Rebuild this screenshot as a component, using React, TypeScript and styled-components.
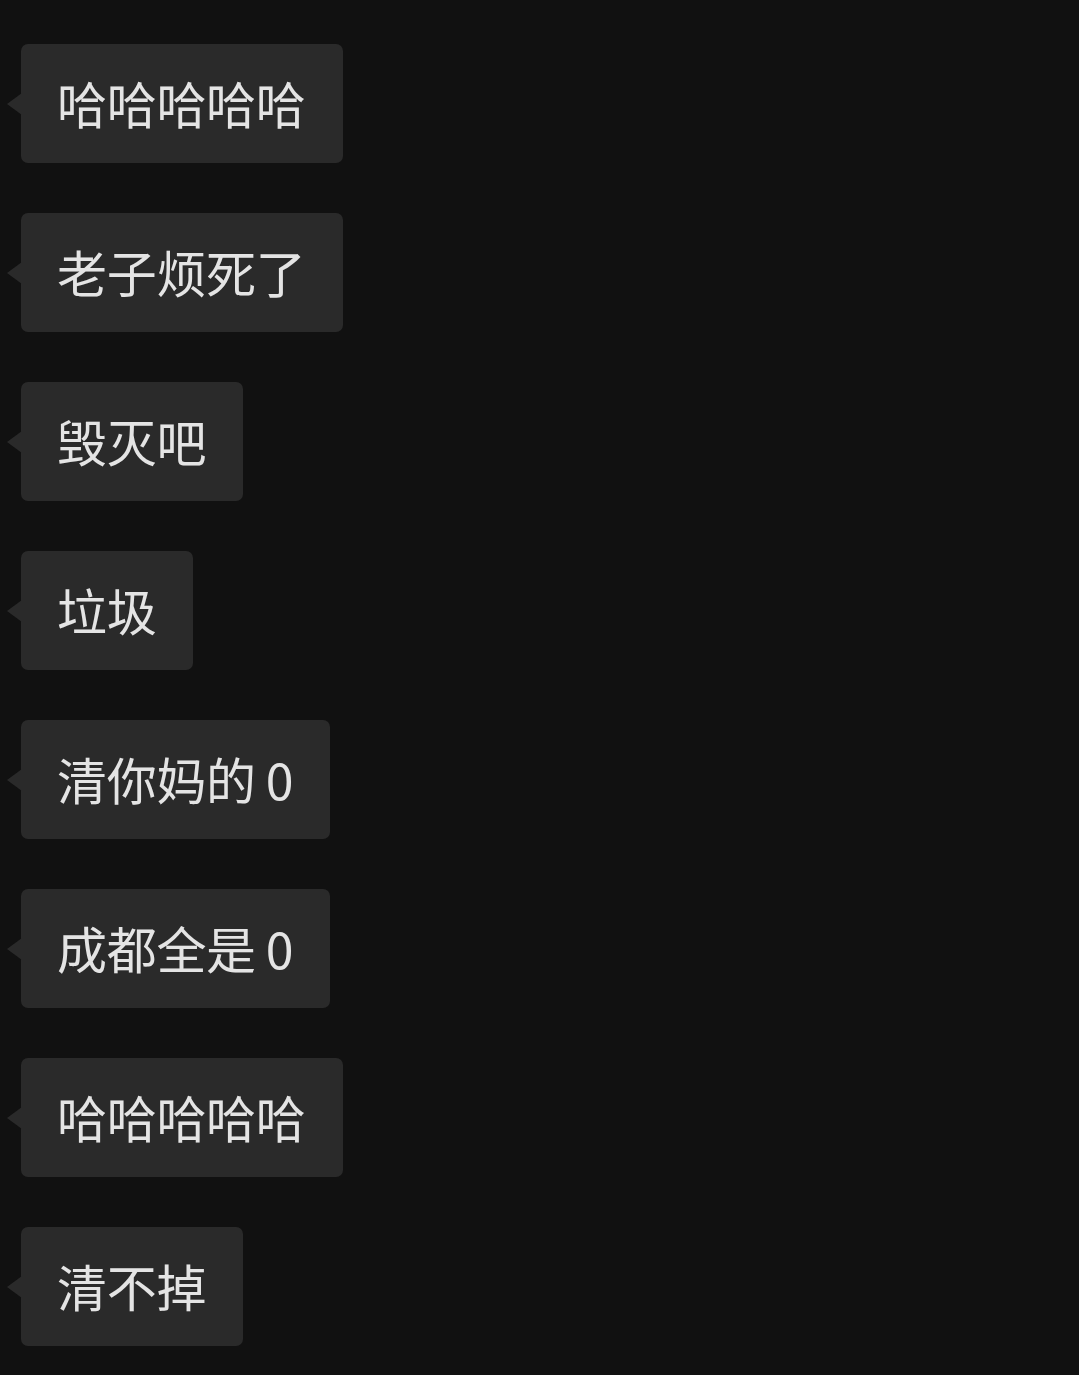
import React from 'react'
import styled, { createGlobalStyle } from 'styled-components'

const GlobalStyle = createGlobalStyle`
  html, body {
    margin: 0;
    padding: 0;
    background: #111111;
  }
  body {
    font-family: "Noto Sans CJK SC", "Noto Sans", sans-serif;
  }
`

const Page = styled.div`
  min-height: 1375px;
  background: #111111;
  display: flex;
  flex-direction: column;
  align-items: flex-start;
  gap: 50px;
  padding: 44px 0 0 21px;
  box-sizing: border-box;
`

const Row = styled.div`
  display: flex;
  align-items: center;
`

const Bubble = styled.div`
  position: relative;
  height: 119px;
  display: flex;
  align-items: center;
  padding: 0 37px 4px 36px;
  box-sizing: border-box;
  background: #2a2a2a;
  border-radius: 7px;
  color: #e4e4e4;
  font-size: 50px;
  line-height: 1;
  white-space: nowrap;
  letter-spacing: -0.3px;

  &::before {
    content: '';
    position: absolute;
    left: -14px;
    top: 50%;
    margin-top: -11px;
    border-style: solid;
    border-width: 11px 15px 11px 0;
    border-color: transparent #2a2a2a transparent transparent;
  }
`

const Digit = styled.span`
  margin-left: 10px;
`

const messages: { text: string; digit?: string }[] = [
  { text: '哈哈哈哈哈' },
  { text: '老子烦死了' },
  { text: '毁灭吧' },
  { text: '垃圾' },
  { text: '清你妈的', digit: '0' },
  { text: '成都全是', digit: '0' },
  { text: '哈哈哈哈哈' },
  { text: '清不掉' },
]

export default function App() {
  return (
    <>
      <GlobalStyle />
      <Page>
        {messages.map((m, i) => (
          <Row key={i}>
            <Bubble>
              {m.text}
              {m.digit && <Digit>{m.digit}</Digit>}
            </Bubble>
          </Row>
        ))}
      </Page>
    </>
  )
}
